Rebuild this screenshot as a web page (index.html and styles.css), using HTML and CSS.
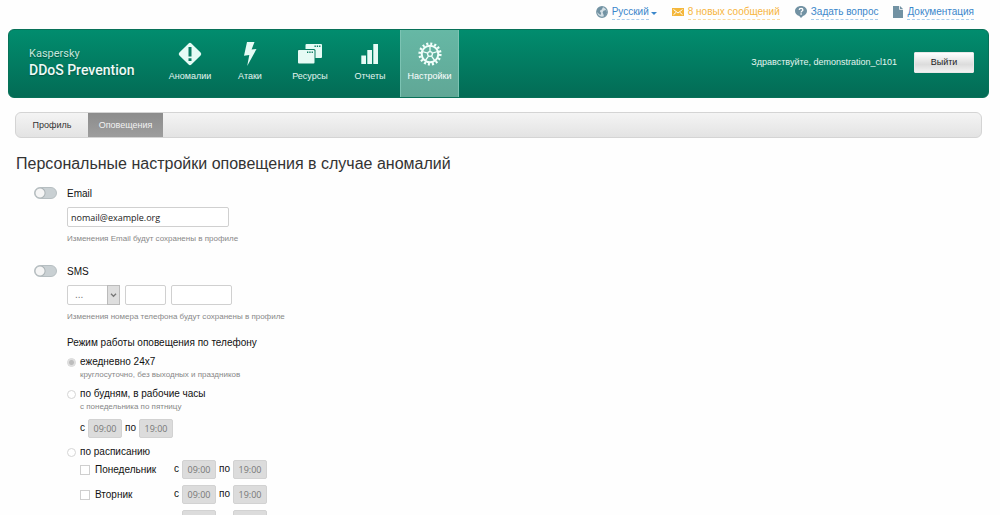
FILE: index.html
```html
<!DOCTYPE html>
<html lang="ru">
<head>
<meta charset="utf-8">
<title>Kaspersky DDoS Prevention</title>
<link rel="stylesheet" href="styles.css">
</head>
<body>
<div class="page">
  <nav class="top-links" aria-label="Служебное меню">
    <a class="top-link" href="#lang">
      <svg class="icon" width="12" height="12" viewBox="0 0 12 12"><circle cx="6" cy="6" r="5.3" fill="#d3dfe5" stroke="#7595a5" stroke-width="1.2"/><path d="M1 3.500C2 1.800 3.700.8 6.200.8L7 1.800 5.800 2.900 5.600 4 4 4.600 4.200 6 5.200 6.800 4.600 9 3 8 1 6zM7.500 4.800L10 4 11 6.500 9.600 9.300 8 10.600 7.400 8.300 6.600 6.600z" fill="#7292a3"/></svg>
      <span class="link-text">Русский</span><span class="caret"></span>
    </a>
    <a class="top-link top-link-alert" href="#messages">
      <svg class="icon" width="12" height="12" viewBox="0 0 12 12"><rect y="2" width="12" height="8" fill="#f4b73b"/><path d="M1.500 3.500L6 7l4.500-3.500M1.500 8.700L4.200 6.300M10.500 8.700L7.800 6.300" fill="none" stroke="#fff" stroke-width="1"/></svg>
      <span class="link-text">8 новых сообщений</span>
    </a>
    <a class="top-link" href="#ask">
      <svg class="icon" width="12" height="12" viewBox="0 0 12 12"><path d="M6 0C9.400 0 12 2.200 12 5.100c0 2.400-1.700 4.200-4 4.800L6 12 4.200 9.900C1.700 9.400 0 7.500 0 5.100 0 2.200 2.600 0 6 0z" fill="#7292a3"/><path d="M4.200 3.900C4.300 1.900 7.900 1.900 7.900 3.900 7.900 5.100 6.100 5 6.100 6.500" fill="none" stroke="#fff" stroke-width="1.300"/><rect x="5.400" y="7.300" width="1.400" height="1.400" fill="#fff"/></svg>
      <span class="link-text">Задать вопрос</span>
    </a>
    <a class="top-link" href="#docs">
      <svg class="icon" width="10" height="12" viewBox="0 0 10 12"><path d="M0 0h6.200v3.800H10V12H0z" fill="#7292a3"/><path d="M7 0l3 3H7z" fill="#7292a3"/></svg>
      <span class="link-text">Документация</span>
    </a>
  </nav>

  <header class="header">
    <div class="brand"><span class="brand-top">Kaspersky</span><span class="brand-name">DDoS Prevention</span></div>
    <nav class="menu" aria-label="Главное меню">
      <a class="menu-item" href="#anomalies">
        <svg width="26" height="26" viewBox="0 0 26 26"><rect x="4.500" y="4.500" width="17" height="17" rx="2" transform="rotate(45 13 13)" fill="#e6fbf5"/><path d="M11.500 6h3v9.500h-3zM11.500 17.200h3v2.800h-3z" fill="#087b61"/></svg>
        <span>Аномалии</span>
      </a>
      <a class="menu-item" href="#attacks">
        <svg width="26" height="26" viewBox="0 0 26 26"><path d="M10 1h7.500L14.600 8.600 19.500 8 10.200 25l2.100-11L7 14.700z" fill="#e6fbf5"/></svg>
        <span>Атаки</span>
      </a>
      <a class="menu-item" href="#resources">
        <svg width="26" height="26" viewBox="0 0 26 26"><rect x="8.500" y="3" width="16.500" height="14" rx="1" fill="#e6fbf5"/><path d="M17.500 5.200h1.300M19.800 5.200h1.300M22.100 5.200h1.300" stroke="#087b61" stroke-width="1.400"/><rect x=".5" y="8" width="18" height="15.500" rx="1.500" fill="#087b61"/><rect x="1" y="9" width="16.500" height="13.500" rx="1" fill="#e6fbf5"/><path d="M10 11.200h1.300M12.300 11.200h1.300M14.600 11.200h1.300" stroke="#087b61" stroke-width="1.400"/></svg>
        <span>Ресурсы</span>
      </a>
      <a class="menu-item" href="#reports">
        <svg width="26" height="26" viewBox="0 0 26 26"><path d="M4.300 14.600H9V23H4.300zM10.300 9H15v14h-4.700zM16.300 3H21v20h-4.700z" fill="#e6fbf5"/></svg>
        <span>Отчеты</span>
      </a>
      <a class="menu-item menu-item-active" href="#settings">
        <svg width="26" height="26" viewBox="0 0 26 26" fill="none" stroke="#f2fffb"><circle cx="13" cy="13" r="8.300" stroke-width="2"/><circle cx="13" cy="13" r="10.300" stroke-width="2.600" stroke-dasharray="2.022 2.022"/><circle cx="13" cy="13" r="2.400" stroke-width="1.300"/><path d="M13 10.500V5M15.400 12.200l5.200-1.700M14.500 15.100l3.200 4.400M11.500 15.100l-3.200 4.400M10.600 12.200L5.400 10.500" stroke-width="1.300"/></svg>
        <span>Настройки</span>
      </a>
    </nav>
    <div class="account"><span>Здравствуйте, demonstration_cl101</span><button class="logout" type="button">Выйти</button></div>
  </header>

  <nav class="tabs" aria-label="Настройки">
    <a class="tab" href="#profile">Профиль</a>
    <a class="tab tab-active" href="#alerts">Оповещения</a>
  </nav>

  <main class="content">
    <h1 class="title">Персональные настройки оповещения в случае аномалий</h1>
    <form class="form">
      <section class="channel">
        <input class="toggle" type="checkbox" id="email-on">
        <div class="fields">
          <label class="name" for="email-on">Email</label>
          <input class="text email" type="email" aria-label="Адрес Email" value="nomail@example.org">
          <p class="hint">Изменения Email будут сохранены в профиле</p>
        </div>
      </section>
      <section class="channel">
        <input class="toggle" type="checkbox" id="sms-on">
        <div class="fields">
          <label class="name" for="sms-on">SMS</label>
          <div class="phone">
            <div class="select-box">
              <select class="select" aria-label="Код страны"><option>...</option></select>
              <svg class="chevron" width="13" height="18" viewBox="0 0 13 18"><path d="M3.500 7.500l3 3 3-3" fill="none" stroke="#777" stroke-width="1.500"/></svg>
            </div>
            <input class="text area-code" type="tel" aria-label="Код">
            <input class="text number" type="tel" aria-label="Номер телефона">
          </div>
          <p class="hint">Изменения номера телефона будут сохранены в профиле</p>

          <div class="modes" role="radiogroup" aria-labelledby="mode-title">
            <h2 class="subtitle" id="mode-title">Режим работы оповещения по телефону</h2>
            <div class="mode">
              <input class="radio" type="radio" name="mode" id="mode-all" checked>
              <div class="mode-body"><label class="label" for="mode-all">ежедневно 24x7</label><p class="note">круглосуточно, без выходных и праздников</p></div>
            </div>
            <div class="mode">
              <input class="radio" type="radio" name="mode" id="mode-work">
              <div class="mode-body"><label class="label" for="mode-work">по будням, в рабочие часы</label><p class="note">с понедельника по пятницу</p>
                <div class="range"><label for="w1">с</label><input class="time" id="w1" value="09:00" disabled><label for="w2">по</label><input class="time" id="w2" value="19:00" disabled></div>
              </div>
            </div>
            <div class="mode">
              <input class="radio" type="radio" name="mode" id="mode-plan">
              <div class="mode-body"><label class="label" for="mode-plan">по расписанию</label>
                <div class="days">
                  <div class="day"><input class="check" type="checkbox" id="d1"><label class="day-name" for="d1">Понедельник</label><div class="range"><label for="d1a">с</label><input class="time" id="d1a" value="09:00" disabled><label for="d1b">по</label><input class="time" id="d1b" value="19:00" disabled></div></div>
                  <div class="day"><input class="check" type="checkbox" id="d2"><label class="day-name" for="d2">Вторник</label><div class="range"><label for="d2a">с</label><input class="time" id="d2a" value="09:00" disabled><label for="d2b">по</label><input class="time" id="d2b" value="19:00" disabled></div></div>
                  <div class="day"><input class="check" type="checkbox" id="d3"><label class="day-name" for="d3">Среда</label><div class="range"><label for="d3a">с</label><input class="time" id="d3a" value="09:00" disabled><label for="d3b">по</label><input class="time" id="d3b" value="19:00" disabled></div></div>
                </div>
              </div>
            </div>
          </div>
        </div>
      </section>
    </form>
  </main>
</div>
</body>
</html>
```
FILE: styles.css
```css
* { box-sizing: border-box; }
body { margin: 0; background: #fefefe; color: #111; font-family: "Liberation Sans", Arial, sans-serif; font-size: 10px; line-height: 14px; }
h1, h2, p { margin: 0; font-weight: normal; }
a { color: inherit; text-decoration: none; }
input, select, button { margin: 0; font: inherit; }

.page { height: 100vh; overflow: hidden auto; scrollbar-width: none; padding: 0 11px 0 8px; }

.top-links { display: flex; justify-content: flex-end; gap: 15px; height: 29px; padding: 5px 15px 0 0; }
.top-link { display: flex; align-items: flex-start; color: #3b87cb; }
.icon { margin: 1px 4px 0 0; }
.link-text { border-bottom: 1px dashed #a9cdec; height: 15px; }
.top-link-alert { color: #f7b540; }
.top-link-alert .link-text { border-color: #fbdc9f; }
.caret { margin: 7px 0 0 2px; border: 3px solid transparent; border-top: 3px solid #3b87cb; border-bottom: 0; }

.header { display: flex; height: 69px; padding-left: 20px; border: 1px solid #087158; border-radius: 6px; background: linear-gradient(#018d6e, #036b55); color: #e4f5f0; font-size: 9px; }
.brand { width: 131px; padding-top: 17px; font-family: Roboto, sans-serif; text-shadow: 0 1px 1px #045542; }
.brand-top, .brand-name { display: block; }
.brand-top { font-size: 11px; color: #c5e8de; }
.brand-name { font-size: 14px; line-height: 18px; font-weight: 500; color: #eefaf7; white-space: nowrap; }
.menu { display: flex; }
.menu-item { display: flex; flex-direction: column; align-items: center; width: 60px; padding-top: 11px; gap: 2px; }
.menu-item-active { width: 59px; background: linear-gradient(#66b8a5, #60a796); border: solid #7cc3b3; border-width: 0 1px; color: #fff; }
.account { display: flex; align-items: center; gap: 17px; margin-left: auto; padding: 0 14px 3px 0; }
.logout { width: 60px; height: 21px; padding: 0; border: 1px solid #e8e8e8; border-radius: 1px; background: linear-gradient(#fff, #dcdcdc 60%, #f2f2f2); color: #222; font-size: 9px; }

.tabs { display: flex; height: 26px; margin: 14px 7px 0; border: 1px solid #d4d4d4; border-radius: 6px; background: linear-gradient(#f4f4f4, #e3e3e3); font-size: 9px; line-height: 24px; text-align: center; overflow: hidden; }
.tab { width: 72px; color: #333; }
.tab-active { width: 75px; background: linear-gradient(#8c8c8c, #9d9d9d); color: #f2f2f2; }

.content { padding: 15px 8px 0; }
.title { font-size: 16px; line-height: 22px; color: #333; }
.form { padding: 12px 0 0 18px; }
.channel { display: flex; gap: 10px; margin-bottom: 20px; }
.toggle { appearance: none; width: 23px; height: 12px; border: 1px solid #b6bec1; border-radius: 6px; background: radial-gradient(circle at 5px 5px, #f5f5f5 4px, #aab2b5 5px, #c9d0d3 6px); }
.fields { display: flex; flex-direction: column; align-items: flex-start; }
.text { height: 20px; padding: 0 3px; border: 1px solid #d0d0d0; border-radius: 2px; background: #fff; color: #222; }
.email { width: 162px; margin-top: 6px; font-family: "Open Sans", sans-serif; font-size: 9px; }
.hint { margin-top: 6px; font-size: 8px; line-height: 12px; color: #888; }
.phone { display: flex; gap: 5px; margin-top: 6px; }
.select-box { position: relative; }
.select { appearance: none; display: block; width: 53px; height: 20px; padding: 0 7px; border: 1px solid #d0d0d0; border-radius: 2px; background: #fff; color: #777; font-size: 10px; }
.chevron { position: absolute; top: 0; right: 0; width: 13px; height: 20px; border: 1px solid #bbb; background: #dedede; pointer-events: none; }
.area-code { width: 41px; }
.number { width: 61px; }

.modes { margin-top: 13px; }
.subtitle { font-size: 10px; line-height: 14px; margin-bottom: 5px; }
.mode { display: flex; gap: 4px; margin-bottom: 6px; }
.radio { appearance: none; width: 9px; height: 9px; margin-top: 3px; border: 1px solid #d5d5d5; border-radius: 50%; background: #fff; }
.radio:checked { background: radial-gradient(circle, #bdbdbd 2px, #fff 4px); }
.label { display: block; }
.note { font-size: 8px; line-height: 12px; color: #888; }
.range { display: flex; gap: 3px; }
.range label { padding-top: 2px; }
.mode-body > .range { margin: 6px 0 1px; }
.time { width: 34px; height: 19px; padding: 0; border: 1px solid #d2d2d2; border-radius: 2px; background: #dcdcdc; color: #777; font-family: "Open Sans", sans-serif; font-size: 9px; text-align: center; }
.days { display: grid; gap: 6px; margin-top: 1px; }
.day { display: flex; }
.check { appearance: none; width: 10px; height: 10px; margin: 5px 5px 0 0; border: 1px solid #cfcfcf; background: #fff; }
.day-name { width: 79px; padding-top: 3px; }
```
